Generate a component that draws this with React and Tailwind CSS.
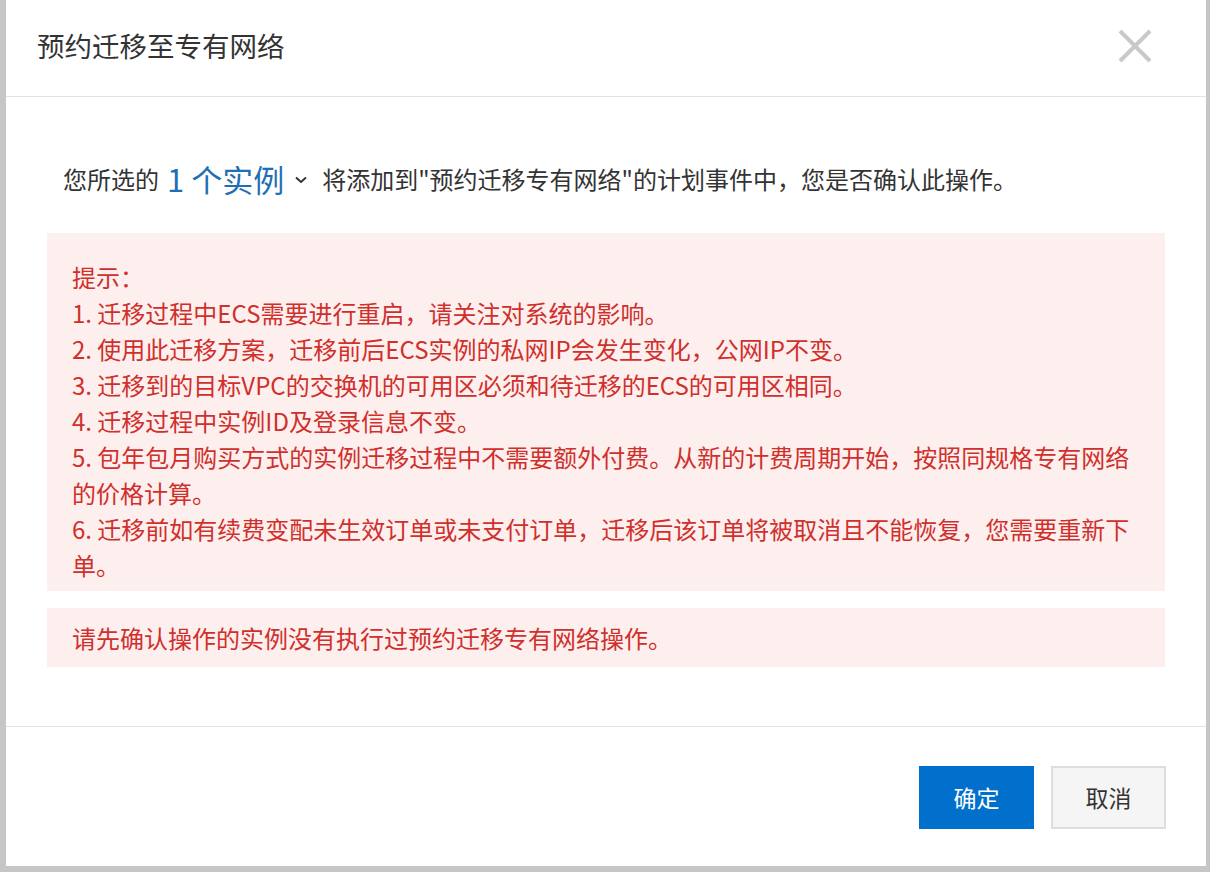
import React from "react";

const notes = [
  "1. 迁移过程中ECS需要进行重启，请关注对系统的影响。",
  "2. 使用此迁移方案，迁移前后ECS实例的私网IP会发生变化，公网IP不变。",
  "3. 迁移到的目标VPC的交换机的可用区必须和待迁移的ECS的可用区相同。",
  "4. 迁移过程中实例ID及登录信息不变。",
  "5. 包年包月购买方式的实例迁移过程中不需要额外付费。从新的计费周期开始，按照同规格专有网络的价格计算。",
  "6. 迁移前如有续费变配未生效订单或未支付订单，迁移后该订单将被取消且不能恢复，您需要重新下单。",
];

export default function App() {
  return (
    <div
      className="w-[1210px] h-[872px] bg-[#c6c6c6] pl-[6px] pr-[4px] pb-[6px] overflow-hidden"
      style={{ fontFamily: '"Noto Sans CJK SC", "Liberation Sans", sans-serif' }}
    >
      <div className="h-full bg-white flex flex-col">
        {/* header */}
        <div className="h-[97px] shrink-0 flex items-center justify-between pl-[31px] pr-[54px] pb-[4px] border-b border-[#e3e3e3]">
          <h1 className="text-[27.5px] text-[#333] font-normal">预约迁移至专有网络</h1>
          <button className="w-[34px] h-[34px] flex items-center justify-center">
            <svg width="34" height="34" viewBox="0 0 34 34">
              <path d="M2 2 L32 32 M32 2 L2 32" stroke="#c9c9c9" strokeWidth="4" />
            </svg>
          </button>
        </div>

        {/* body */}
        <div className="flex-1 px-[41px] pt-[62px]">
          <div className="flex items-center h-[40px] text-[24px] text-[#333] pl-[16px]">
            <span>您所选的</span>
            <span className="text-[#1f6fb4] text-[31px] ml-[8px] mr-[10px]">1 个实例</span>
            <svg width="14" height="10" viewBox="0 0 14 10" className="mr-[14px] mt-[2px]">
              <path d="M2 2.5 L7 7 L12 2.5" fill="none" stroke="#333" strokeWidth="2" />
            </svg>
            <span>将添加到"预约迁移专有网络"的计划事件中，您是否确认此操作。</span>
          </div>

          <div className="mt-[34px] bg-[#fdefee] pl-[25px] pr-[30px] pt-[26px] pb-[8px] text-[24px] leading-[36px] text-[#d0302c]">
            <p>提示：</p>
            {notes.map((n) => (
              <p key={n}>{n}</p>
            ))}
          </div>

          <div className="mt-[17px] bg-[#fdefee] h-[59px] flex items-center px-[25px] text-[24px] text-[#d0302c]">
            请先确认操作的实例没有执行过预约迁移专有网络操作。
          </div>
        </div>

        {/* footer */}
        <div className="h-[140px] shrink-0 border-t border-[#e3e3e3] flex justify-end items-start gap-[17px] pt-[39px] pr-[40px]">
          <button className="w-[115px] h-[63px] bg-[#0070cc] text-white text-[23px]">确定</button>
          <button className="w-[115px] h-[63px] bg-[#f5f5f5] border-2 border-[#dedede] text-[#333] text-[23px]">
            取消
          </button>
        </div>
      </div>
    </div>
  );
}
